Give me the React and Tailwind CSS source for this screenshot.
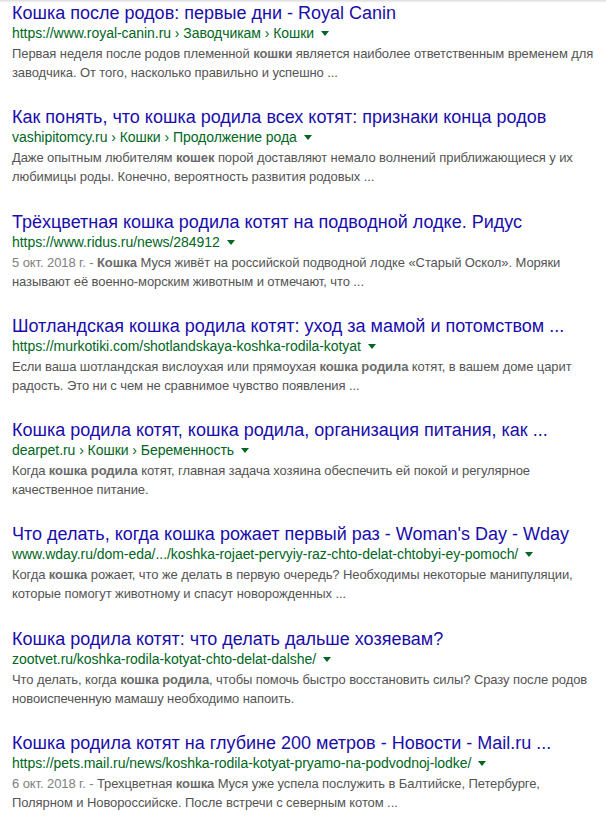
import React from "react";

const items = [
  {
    title: "Кошка после родов: первые дни - Royal Canin",
    url: "https://www.royal-canin.ru › Заводчикам › Кошки",
    lines: [
      [["Первая неделя после родов племенной "], ["кошки", 1], [" является наиболее ответственным временем для"]],
      [["заводчика. От того, насколько правильно и успешно ..."]],
    ],
  },
  {
    title: "Как понять, что кошка родила всех котят: признаки конца родов",
    url: "vashipitomcy.ru › Кошки › Продолжение рода",
    lines: [
      [["Даже опытным любителям "], ["кошек", 1], [" порой доставляют немало волнений приближающиеся у их"]],
      [["любимицы роды. Конечно, вероятность развития родовых ..."]],
    ],
  },
  {
    title: "Трёхцветная кошка родила котят на подводной лодке. Ридус",
    url: "https://www.ridus.ru/news/284912",
    date: "5 окт. 2018 г. - ",
    lines: [
      [["Кошка", 1], [" Муся живёт на российской подводной лодке «Старый Оскол». Моряки"]],
      [["называют её военно-морским животным и отмечают, что ..."]],
    ],
  },
  {
    title: "Шотландская кошка родила котят: уход за мамой и потомством ...",
    url: "https://murkotiki.com/shotlandskaya-koshka-rodila-kotyat",
    lines: [
      [["Если ваша шотландская вислоухая или прямоухая "], ["кошка родила", 1], [" котят, в вашем доме царит"]],
      [["радость. Это ни с чем не сравнимое чувство появления ..."]],
    ],
  },
  {
    title: "Кошка родила котят, кошка родила, организация питания, как ...",
    url: "dearpet.ru › Кошки › Беременность",
    lines: [
      [["Когда "], ["кошка родила", 1], [" котят, главная задача хозяина обеспечить ей покой и регулярное"]],
      [["качественное питание."]],
    ],
  },
  {
    title: "Что делать, когда кошка рожает первый раз - Woman's Day - Wday",
    url: "www.wday.ru/dom-eda/.../koshka-rojaet-pervyiy-raz-chto-delat-chtobyi-ey-pomoch/",
    lines: [
      [["Когда "], ["кошка", 1], [" рожает, что же делать в первую очередь? Необходимы некоторые манипуляции,"]],
      [["которые помогут животному и спасут новорожденных ..."]],
    ],
  },
  {
    title: "Кошка родила котят: что делать дальше хозяевам?",
    url: "zootvet.ru/koshka-rodila-kotyat-chto-delat-dalshe/",
    lines: [
      [["Что делать, когда "], ["кошка родила", 1], [", чтобы помочь быстро восстановить силы? Сразу после родов"]],
      [["новоиспеченную мамашу необходимо напоить."]],
    ],
  },
  {
    title: "Кошка родила котят на глубине 200 метров - Новости - Mail.ru ...",
    url: "https://pets.mail.ru/news/koshka-rodila-kotyat-pryamo-na-podvodnoj-lodke/",
    date: "6 окт. 2018 г. - ",
    lines: [
      [["Трехцветная "], ["кошка", 1], [" Муся уже успела послужить в Балтийске, Петербурге,"]],
      [["Полярном и Новороссийске. После встречи с северным котом ..."]],
    ],
  },
];

function Result({ item }) {
  return (
    <div className="mb-[23.3px]">
      <div className="text-[18px] leading-[24px] text-[#1a0dab] whitespace-nowrap">{item.title}</div>
      <div className="flex items-center text-[14px] leading-[16px] text-[#006621] whitespace-nowrap tracking-[-0.05px]">
        <span>{item.url}</span>
        <span className="ml-[7px] mt-[1px] w-0 h-0 border-l-[4px] border-r-[4px] border-t-[5px] border-l-transparent border-r-transparent border-t-[#006621]" />
      </div>
      <div className="mt-[3px] text-[13px] leading-[19px] text-[#545454] tracking-[-0.09px]">
        {item.lines.map((line, i) => (
          <div key={i} className="whitespace-nowrap">
            {i === 0 && item.date ? <span className="text-[#808080]">{item.date}</span> : null}
            {line.map(([t, b], j) =>
              b ? (
                <b key={j} className="font-bold text-[#6a6a6a]">{t}</b>
              ) : (
                <span key={j}>{t}</span>
              )
            )}
          </div>
        ))}
      </div>
    </div>
  );
}

export default function App() {
  return (
    <div className="w-[606px] h-[822px] bg-white overflow-hidden relative" style={{ fontFamily: '"Liberation Sans", Arial, sans-serif' }}>
      <div className="absolute top-0 left-0 right-0 h-[3px] bg-gradient-to-b from-[#dcdcdc] to-white" />
      <div className="pl-[12px] pt-[1px]">
        {items.map((it, i) => (
          <Result key={i} item={it} />
        ))}
      </div>
    </div>
  );
}
